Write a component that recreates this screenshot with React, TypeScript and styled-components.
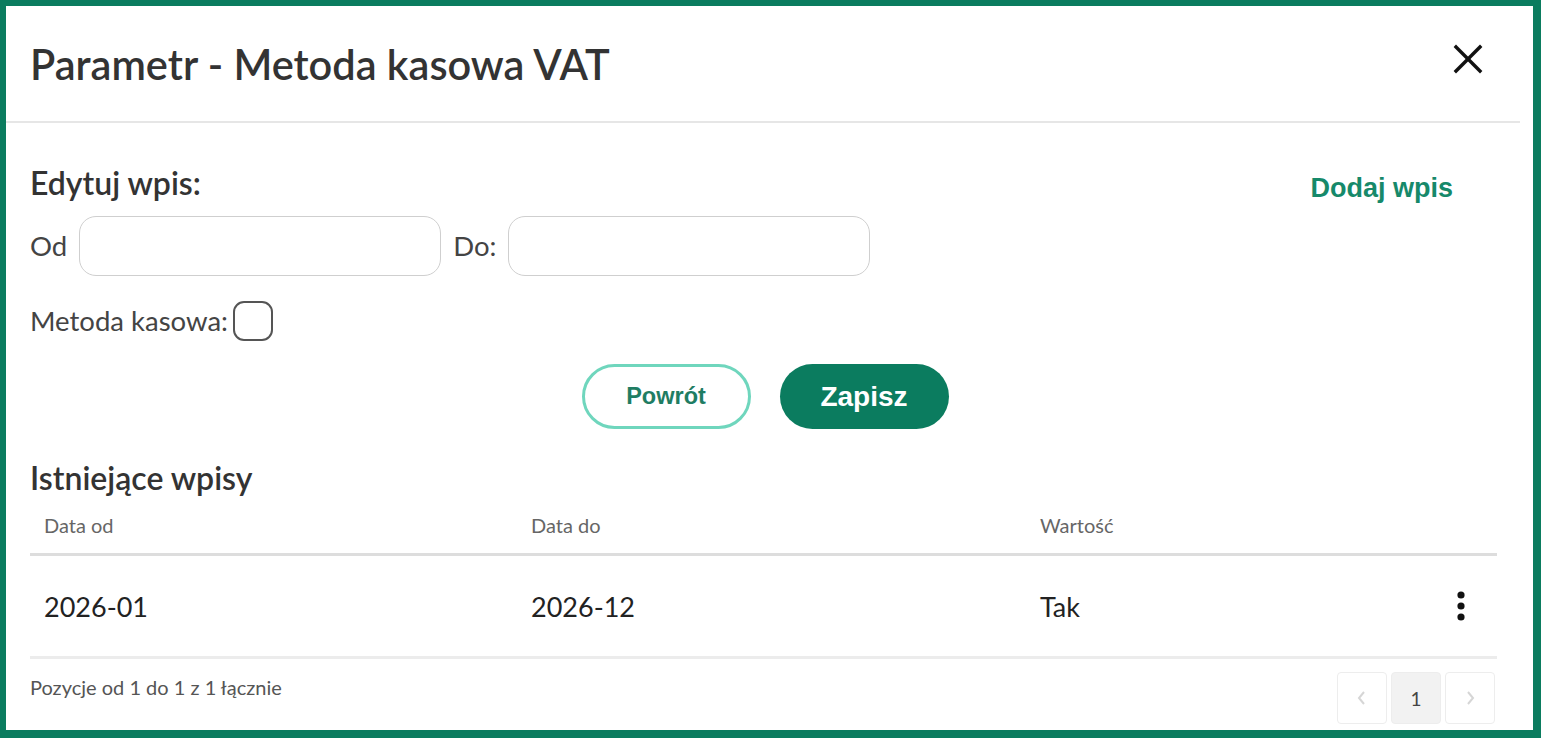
import * as React from 'react';
import styled, { createGlobalStyle } from 'styled-components';

const GlobalStyle = createGlobalStyle`
    html, body {
        margin: 0;
        padding: 0;
        background: #ffffff;
    }
    * {
        box-sizing: border-box;
    }
`;

const Frame = styled.div`
    width: 1541px;
    height: 738px;
    border-style: solid;
    border-color: #0b7c5f;
    border-width: 6px 8px 8px 6px;
    background: #ffffff;
    overflow: hidden;
    font-family: Lato, "Open Sans", sans-serif;
    color: #333333;
`;

const Modal = styled.div`
    width: 1514px;
    display: flex;
    flex-direction: column;
`;

const Header = styled.header`
    display: flex;
    align-items: center;
    justify-content: space-between;
    height: 117px;
    padding: 0 37px 0 24px;
    border-bottom: 2px solid #e6e6e6;
`;

const Title = styled.h1`
    margin: 0;
    font-size: 41.5px;
    font-weight: 600;
    color: #333333;
`;

const CloseButton = styled.button`
    display: flex;
    margin-bottom: 10px;
    padding: 0;
    background: transparent;
    border: none;
    cursor: pointer;
`;

const Body = styled.div`
    display: flex;
    flex-direction: column;
    padding: 0 17px 0 24px;
`;

const EditHead = styled.div`
    display: flex;
    justify-content: space-between;
    align-items: flex-start;
    padding-top: 44px;
`;

const SectionTitle = styled.h2`
    margin: 0;
    font-size: 32px;
    font-weight: 600;
    line-height: 32px;
    color: #333333;
`;

const AddLink = styled.a`
    margin: 6px 50px 0 0;
    font-family: "Liberation Sans", Arial, sans-serif;
    font-size: 27px;
    font-weight: 700;
    color: #16896a;
    text-decoration: none;
    cursor: pointer;
`;

const FieldRow = styled.div`
    display: flex;
    align-items: center;
    gap: 12px;
    margin-top: 12px;
`;

const Label = styled.label`
    font-size: 27.5px;
    line-height: 32px;
    color: #444444;
`;

const TextInput = styled.input`
    width: 362px;
    height: 60px;
    border: 1px solid #cfcfcf;
    border-radius: 17px;
    outline: 0;
    font-family: inherit;
    font-size: 22px;
    padding: 0 14px;
`;

const CheckRow = styled.div`
    display: flex;
    align-items: center;
    gap: 5px;
    margin-top: 25px;
`;

const Checkbox = styled.span`
    display: inline-block;
    width: 40px;
    height: 40px;
    border: 2px solid #555555;
    border-radius: 11px;
`;

const Actions = styled.div`
    display: flex;
    justify-content: center;
    gap: 29px;
    margin-top: 23px;
    padding-right: 3px;
`;

const PillButton = styled.button<{ $primary?: boolean }>`
    width: 169px;
    height: 65px;
    border-radius: 33px;
    font-family: "Liberation Sans", Arial, sans-serif;
    font-weight: 700;
    font-size: ${({ $primary }) => ($primary ? '28px' : '23.5px')};
    color: ${({ $primary }) => ($primary ? '#ffffff' : '#1f7d63')};
    background: ${({ $primary }) => ($primary ? '#0b7c5f' : '#ffffff')};
    border: ${({ $primary }) => ($primary ? 'none' : '3px solid #6fd6bd')};
    cursor: pointer;
`;

const ListTitle = styled(SectionTitle)`
    margin-top: 33px;
`;

const Table = styled.div`
    width: 1467px;
    margin-top: 3px;
`;

const TableRow = styled.div<{ $head?: boolean }>`
    display: grid;
    grid-template-columns: 487px 509px 1fr 70px;
    align-items: center;
    height: ${({ $head }) => ($head ? '59px' : '103px')};
    border-bottom: ${({ $head }) => ($head ? '3px solid #dddddd' : '3px solid #ececec')};
    font-size: ${({ $head }) => ($head ? '20px' : '27px')};
    color: ${({ $head }) => ($head ? '#666666' : '#222222')};
`;

const Cell = styled.div`
    padding-left: 14px;
`;

const MenuCell = styled.div`
    display: flex;
    justify-content: flex-start;
    padding-left: 29px;
`;

const Footer = styled.div`
    display: flex;
    justify-content: space-between;
    align-items: flex-start;
    width: 1467px;
    padding-top: 13px;
`;

const Summary = styled.span`
    margin-top: 3px;
    font-size: 20px;
    line-height: 24px;
    color: #555555;
`;

const Pager = styled.div`
    display: flex;
    gap: 4px;
    margin-right: 2px;
`;

const PageButton = styled.button<{ $active?: boolean }>`
    display: flex;
    align-items: center;
    justify-content: center;
    width: 50px;
    height: 52px;
    padding: 0;
    border: 1px solid #ededed;
    border-radius: 4px;
    background: ${({ $active }) => ($active ? '#f2f2f2' : '#ffffff')};
    color: #444444;
    font-family: Lato, sans-serif;
    font-size: 19px;
`;

function CloseIcon() {
    return (
        <svg width={30} height={30} viewBox="0 0 30 30" fill="none" stroke="#111111" strokeWidth="3.4" strokeLinecap="square">
            <path d="M3,3 L27,27" />
            <path d="M27,3 L3,27" />
        </svg>
    );
}

function KebabIcon() {
    return (
        <svg width={10} height={32} viewBox="0 0 10 32" fill="#111111">
            <circle cx="5" cy="5" r="3.6" />
            <circle cx="5" cy="16" r="3.6" />
            <circle cx="5" cy="27" r="3.6" />
        </svg>
    );
}

function Chevron({ dir }: { dir: 'left' | 'right' }) {
    return (
        <svg width={10} height={14} viewBox="0 0 10 14" fill="none" stroke="#d6d6d6" strokeWidth="2">
            <path d={dir === 'left' ? 'M7,1 L2,7 L7,13' : 'M3,1 L8,7 L3,13'} />
        </svg>
    );
}

const entries = [{ from: '2026-01', to: '2026-12', value: 'Tak' }];

export default function App() {
    return (
        <>
            <GlobalStyle />
            <Frame>
                <Modal>
                    <Header>
                        <Title>Parametr - Metoda kasowa VAT</Title>
                        <CloseButton aria-label="Zamknij"><CloseIcon /></CloseButton>
                    </Header>
                    <Body>
                        <EditHead>
                            <SectionTitle>Edytuj wpis:</SectionTitle>
                            <AddLink>Dodaj wpis</AddLink>
                        </EditHead>
                        <FieldRow>
                            <Label>Od</Label>
                            <TextInput />
                            <Label>Do:</Label>
                            <TextInput />
                        </FieldRow>
                        <CheckRow>
                            <Label>Metoda kasowa:</Label>
                            <Checkbox />
                        </CheckRow>
                        <Actions>
                            <PillButton>Powrót</PillButton>
                            <PillButton $primary>Zapisz</PillButton>
                        </Actions>
                        <ListTitle>Istniejące wpisy</ListTitle>
                        <Table>
                            <TableRow $head>
                                <Cell>Data od</Cell>
                                <Cell>Data do</Cell>
                                <Cell>Wartość</Cell>
                                <Cell />
                            </TableRow>
                            {entries.map(e => (
                                <TableRow key={e.from}>
                                    <Cell>{e.from}</Cell>
                                    <Cell>{e.to}</Cell>
                                    <Cell>{e.value}</Cell>
                                    <MenuCell><KebabIcon /></MenuCell>
                                </TableRow>
                            ))}
                        </Table>
                        <Footer>
                            <Summary>Pozycje od 1 do 1 z 1 łącznie</Summary>
                            <Pager>
                                <PageButton><Chevron dir="left" /></PageButton>
                                <PageButton $active>1</PageButton>
                                <PageButton><Chevron dir="right" /></PageButton>
                            </Pager>
                        </Footer>
                    </Body>
                </Modal>
            </Frame>
        </>
    );
}
